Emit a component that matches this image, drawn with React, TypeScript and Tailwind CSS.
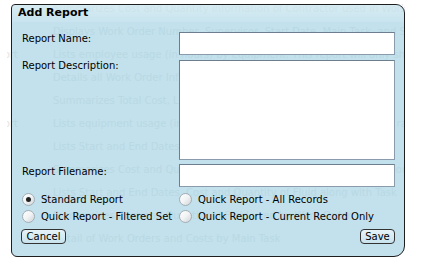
const font = { fontFamily: '"DejaVu Sans", Verdana, sans-serif' };

const rows: [string, string][] = [
  ['', 'Summarizes Cost and Quantity information of Contractor used in Work Orders'],
  ['', 'Displays Work Order Number, Supervisor, Start Date, Main Task, and Status'],
  ['Employee Usage Report', 'Lists employee usage (in hours) by equipment. This report will only show'],
  ['', 'Details all Work Order Information for the selected date range'],
  ['', 'Summarizes Total Cost, Labor and Material by Work Order'],
  ['Equipment Usage Report', 'Lists equipment usage (in hours) by employee for the selected date range'],
  ['', 'Lists Start and End Dates, Cost and Quantity of Material along with'],
  ['', 'Summarizes Cost and Quantity of Material by Work Order and Location'],
  ['', 'Lists Start and End Dates, Cost and Quantity of Fluid along with Task'],
  ['', 'Summarizes Cost and Quantity of Fluid used by Work Order'],
  ['', 'Detail of Work Orders and Costs by Main Task'],
];

const Radio = ({ checked, label }: { checked?: boolean; label: string }) => (
  <label className="flex items-center gap-[6px] h-[16px] whitespace-nowrap">
    <span className="w-[13px] h-[13px] rounded-full border border-[#a4aeb5] bg-gradient-to-br from-[#ffffff] via-[#f1f3f4] to-[#cfd5da] flex items-center justify-center shrink-0">
      {checked && <span className="w-[5px] h-[5px] rounded-full bg-[#222]" />}
    </span>
    <span>{label}</span>
  </label>
);

const inputCls =
  'bg-white border border-[#8a9cab] border-t-[#6d7f8e] border-l-[#6d7f8e]';

export default function App() {
  return (
    <div className="relative w-[422px] h-[266px] bg-white overflow-hidden text-[10px] text-black" style={font}>
      <div className="w-[405px] -mt-[3px] overflow-hidden text-[#e4e4e4] text-[10px]">
        {rows.map(([name, desc], i) => (
          <div key={i} className="flex items-center h-[23px] whitespace-nowrap">
            <div className="ml-[7px] w-[11px] shrink-0 overflow-hidden flex justify-end">
              <span className="shrink-0">{name}</span>
            </div>
            <div className="ml-[35px]">{desc}</div>
          </div>
        ))}
      </div>

      <div className="absolute left-[11px] top-[4px] w-[394px] h-[253px] border border-[#1e1e1e] rounded-[9px] rounded-tl-[4px] rounded-bl-[6px] rounded-br-[11px] bg-[rgba(163,209,226,0.66)] flex flex-col overflow-hidden">
        <div className="h-[17px] shrink-0 pl-[6px] flex items-center font-bold text-[11px] bg-gradient-to-b from-[rgba(255,255,255,0.35)] to-[rgba(255,255,255,0.1)]">
          Add Report
        </div>
        <div className="grid grid-cols-[157px_216px] pl-[10px] pt-[10px] leading-[13px]">
          <div>Report Name:</div>
          <div className={`${inputCls} h-[23px]`} />
          <div className="pt-[4px]">Report Description:</div>
          <div className={`${inputCls} h-[100px] mt-[5px]`} />
          <div className="pt-[5px]">Report Filename:</div>
          <div className={`${inputCls} h-[23px] mt-[4px]`} />
        </div>
        <div className="grid grid-cols-[157px_216px] pl-[10px] pt-[4px] gap-y-[1px]">
          <Radio checked label="Standard Report" />
          <Radio label="Quick Report - All Records" />
          <Radio label="Quick Report - Filtered Set" />
          <Radio label="Quick Report - Current Record Only" />
        </div>
        <div className="flex justify-between pl-[9px] pr-[9px] pt-[5px]">
          <button className="w-[45px] h-[15px] border border-[#333] rounded-[4px] bg-gradient-to-b from-[#e6f3f8] to-[#c8e3ee] leading-[13px]">
            Cancel
          </button>
          <button className="w-[35px] h-[15px] border border-[#333] rounded-[4px] bg-gradient-to-b from-[#e6f3f8] to-[#c8e3ee] leading-[13px]">
            Save
          </button>
        </div>
      </div>
    </div>
  );
}
